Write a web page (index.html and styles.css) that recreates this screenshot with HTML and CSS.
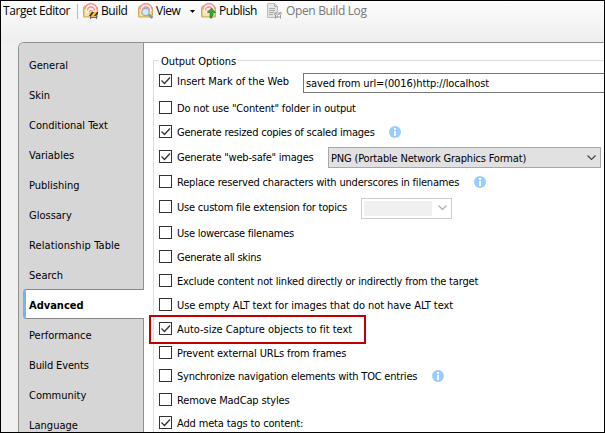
FILE: index.html
```html
<!DOCTYPE html>
<html lang="en">
<head>
<meta charset="utf-8">
<title>Target Editor</title>
<link rel="stylesheet" href="styles.css">
</head>
<body>
<svg class="defs" width="0" height="0" aria-hidden="true">
  <defs>
    <g id="folder">
      <path d="M.5 4.500l1-1.500h4l1 1.500h8v9.500H.5z" fill="#edca78" stroke="#d5ae5c"/>
      <path d="M2 7h11v6H2z" fill="#fbe3a0"/>
      <path d="M2 7a6 6 0 0 1 12 0L12 10H4z" fill="#fff1ed"/>
      <path d="M2 6.500a6 6 0 0 1 12 0M4.500 7.500a3.500 3.500 0 0 1 7 0M6.500 9a1.500 1.500 0 0 1 3 0" fill="none" stroke="#f58f93" stroke-width="1.300"/>
    </g>
    <g id="info">
      <circle cx="6" cy="6" r="6" fill="#99ccff"/>
      <path d="M5 2h2v2H5zM5 5h2v5H5z" fill="#fff"/>
    </g>
    <path id="tick" d="M2.500 6.500l3 3 5.500-6" fill="none" stroke="#333" stroke-width="1.300"/>
  </defs>
</svg>
<div class="window">
  <header class="toolbar">
    <span class="title">Target Editor</span>
    <span class="separator"></span>
    <svg class="tool-icon" viewBox="0 0 16 16"><use href="#folder"/><path d="M6 9h9v4H6z" fill="#f6c52b"/><path d="M6 13l3-4h2l-3 4zM11 13l3-4h1v2l-2 2z" fill="#333"/><path d="M7.500 13v3M13.500 13v3M7 14.500h7" stroke="#666"/></svg>
    <span class="build">Build</span>
    <svg class="tool-icon" viewBox="0 0 16 16"><use href="#folder"/><path d="M10.500 11.500l4 3.500" stroke="#8a98a5" stroke-width="2.500"/><circle cx="7.500" cy="9" r="3.700" fill="#d9e7f5" stroke="#9aaebf" stroke-width="1.300"/></svg>
    <span class="view">View</span>
    <svg class="caret" viewBox="0 0 5 3"><path d="M0 0h5L2.500 3z"/></svg>
    <svg class="tool-icon" viewBox="0 0 16 16"><use href="#folder"/><path d="M10.500 5l4 4.500H12V13h-1v2H9v-2-3.500H6.500z" fill="#27ad38" stroke="#167b26" stroke-width=".6"/></svg>
    <span class="publish">Publish</span>
    <svg class="tool-icon log-icon" viewBox="0 0 16 16"><path d="M1.500.5h7l3 3v11h-10z" fill="#e5e5e5" stroke="#bbb"/><path d="M8.500.5v3h3M3 5.500h6M3 7.500h6M3 9.500h6M3 11.500h4" fill="none" stroke="#aaa"/><path d="M8 9h8v3H8z" fill="#d0d0d0"/><path d="M8 11.500l3-2M12 11.500l3-2M9.500 12v3.500M14.500 12v3.500M9 14h6" stroke="#999" fill="none"/></svg>
    <span class="open-log">Open Build Log</span>
  </header>
  <main class="panel">
    <nav class="tabs">
      <a>General</a><a>Skin</a><a>Conditional Text</a><a>Variables</a><a>Publishing</a><a>Glossary</a><a class="wide">Relationship Table</a><a>Search</a><a class="active">Advanced</a><a>Performance</a><a class="tight">Build Events</a><a>Community</a><a>Language</a>
    </nav>
    <section class="content">
      <div class="group">
        <h2>Output Options</h2>
        <div class="options">
          <div class="row"><svg class="check"><use href="#tick"/></svg><span class="label l1">Insert Mark of the Web</span><span class="input">saved from url=(0016)http://localhost</span></div>
          <div class="row"><svg class="check"></svg><span class="label l2">Do not use "Content" folder in output</span></div>
          <div class="row"><svg class="check"><use href="#tick"/></svg><span class="label l3">Generate resized copies of scaled images</span><svg class="info"><use href="#info"/></svg></div>
          <div class="row"><svg class="check"><use href="#tick"/></svg><span class="label l4">Generate "web-safe" images</span><span class="select"><span class="value">PNG (Portable Network Graphics Format)</span><svg class="chevron" viewBox="0 0 9 6"><path d="M.5.5l4 4 4-4"/></svg></span></div>
          <div class="row"><svg class="check"></svg><span class="label l5">Replace reserved characters with underscores in filenames</span><svg class="info"><use href="#info"/></svg></div>
          <div class="row"><svg class="check"></svg><span class="label l6">Use custom file extension for topics</span><span class="select disabled"><i></i><svg class="chevron" viewBox="0 0 9 6"><path d="M.5.5l4 4 4-4"/></svg></span></div>
          <div class="row"><svg class="check"></svg><span class="label l7">Use lowercase filenames</span></div>
          <div class="row"><svg class="check"></svg><span class="label l8">Generate all skins</span></div>
          <div class="row"><svg class="check"></svg><span class="label l9">Exclude content not linked directly or indirectly from the target</span></div>
          <div class="row"><svg class="check"></svg><span class="label l10">Use empty ALT text for images that do not have ALT text</span></div>
          <div class="row marked"><svg class="check"><use href="#tick"/></svg><span class="label l11">Auto-size Capture objects to fit text</span></div>
          <div class="row"><svg class="check"></svg><span class="label l12">Prevent external URLs from frames</span></div>
          <div class="row"><svg class="check"></svg><span class="label l13">Synchronize navigation elements with TOC entries</span><svg class="info"><use href="#info"/></svg></div>
          <div class="row"><svg class="check"></svg><span class="label l14">Remove MadCap styles</span></div>
          <div class="row"><svg class="check"><use href="#tick"/></svg><span class="label l15">Add meta tags to content:</span></div>
        </div>
      </div>
    </section>
  </main>
</div>
</body>
</html>
```
FILE: styles.css
```css
*, *::after { box-sizing: border-box; }
body { margin: 0; font: 11px/14px "DejaVu Sans Condensed", "DejaVu Sans", sans-serif; font-stretch: condensed; color: #000; }
svg { display: block; flex: none; }
.defs { position: absolute; }
.window { width: 605px; height: 433px; border: 1px solid #000; background: #f0f0f0; overflow: hidden; display: flex; flex-direction: column; }
.toolbar { height: 41px; flex: none; display: flex; align-items: flex-start; padding: 2px 0 0 2px; background: linear-gradient(#fdfdfd, #eee); font: 12px/16px "Open Sans", sans-serif; }
.toolbar span { white-space: nowrap; flex: none; }
.title { width: 74px; letter-spacing: -.4px; }
.toolbar .separator { width: 1px; height: 15px; background: #bbb; margin: 1px 5px 0 0; }
.tool-icon { width: 16px; height: 16px; }
.build { width: 36px; margin: 0 1px 0 2px; letter-spacing: -.4px; }
.view { width: 26px; margin-left: 2px; letter-spacing: -.5px; }
.caret { width: 5px; height: 3px; margin: 7px 6px 0 8px; }
.publish { width: 38px; margin: 0 9px 0 2px; letter-spacing: -.45px; }
.open-log { color: #777; margin-left: 4px; letter-spacing: -.35px; }
.panel { flex: 1; min-height: 0; margin-left: 17px; border: solid #919191; border-width: 1px 0 0 1px; border-radius: 6px 0 0 0; background: #fff; display: flex; overflow: hidden; }
.tabs { width: 125px; flex: none; padding-top: 7px; background: #d6d6d6; display: flex; flex-direction: column; box-shadow: inset -1px 0 #919191; }
.tabs a { height: 30px; flex: none; padding-left: 10px; line-height: 32px; white-space: nowrap; }
.tabs .wide { letter-spacing: .1px; }
.tabs .tight { letter-spacing: -.15px; }
.tabs .active { margin: -1px 0 1px 4px; padding-left: 3px; height: 30px; line-height: 32px; background: #fff; border: solid #888; border-width: 1px 0 1px 0; border-left: 3px solid #7ab5e8; border-radius: 3px 0 0 3px; font-weight: 700; }
.content { flex: 1; min-width: 0; padding: 17px 0 0 9px; }
.group { height: 400px; border: solid #dcdcdc; border-width: 1px 0 0 1px; }
h2 { font: inherit; width: 78px; margin: -7px 0 0 5px; padding-left: 2px; height: 14px; line-height: 16px; background: #fff; white-space: nowrap; letter-spacing: -.05px; }
.options { display: grid; grid-template-rows: 27px 24px 25px 25px 25px 26px 24px 24px 24px 24px 24px 23px 24px 23px 23px; padding: 6px 0 0 5px; }
.row { position: relative; display: flex; align-items: center; height: 13px; white-space: nowrap; }
.check { width: 13px; height: 13px; border: 1px solid #333; background: #fff; margin-right: 5px; overflow: visible; }
.check use { transform: translate(-1px, -1px); }
.label { flex: none; margin-right: 15px; padding-top: 2px; }
.input { width: 302px; height: 20px; flex: none; border: 1px solid #777; padding-left: 2px; line-height: 20px; margin-top: 5px; letter-spacing: -.13px; }
.select { width: 273px; height: 21px; flex: none; border: 1px solid #a8a8a8; background: #e1e1e1; display: flex; align-items: center; justify-content: space-between; padding: 0 4px 0 2px; margin-top: 2px; }
.value { padding-top: 2px; letter-spacing: -.18px; }
.chevron { width: 9px; height: 6px; }
.chevron path { fill: none; stroke: #444; stroke-width: 1.200; }
.disabled { width: 91px; background: #fff; border-color: #ccc; padding-left: 2px; margin-top: 3px; }
.disabled i { width: 68px; height: 15px; background: #f0f0f0; }
.disabled .chevron path { stroke: #aaa; }
.info { width: 12px; height: 12px; margin-top: 1px; }
.marked::after { content: ""; position: absolute; left: -10px; top: -7px; width: 217px; height: 29px; border: 2px solid #c00000; }
.l1 { width: 111px; letter-spacing: -.03px; }
.l2 { letter-spacing: -.17px; }
.l3 { width: 197px; letter-spacing: -.22px; }
.l4 { width: 136px; letter-spacing: -.23px; }
.l5 { width: 282px; letter-spacing: -.19px; }
.l6 { width: 169px; letter-spacing: -.2px; }
.l7 { letter-spacing: -.25px; }
.l8 { letter-spacing: -.28px; }
.l9 { letter-spacing: -.18px; }
.l10 { letter-spacing: -.07px; }
.l11 { letter-spacing: -.03px; }
.l12 { letter-spacing: -.12px; }
.l13 { width: 240px; letter-spacing: -.21px; }
.l14 { letter-spacing: -.15px; }
.l15 { letter-spacing: -.15px; }
```
